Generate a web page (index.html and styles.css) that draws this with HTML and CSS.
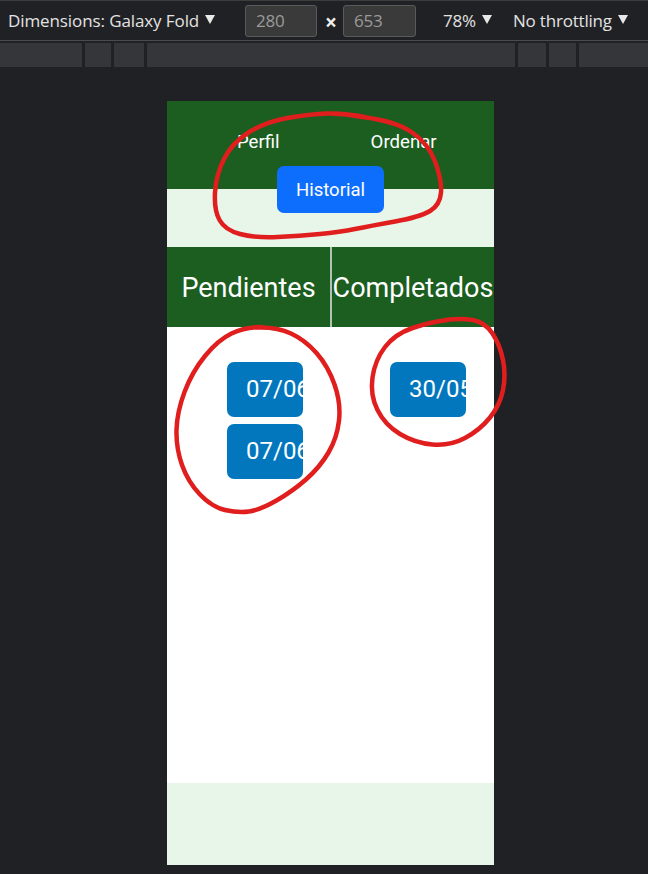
FILE: index.html
```html
<!DOCTYPE html>
<html lang="es">
<head>
<meta charset="utf-8">
<title>Galaxy Fold preview</title>
<link rel="stylesheet" href="styles.css">
</head>
<body>
<div class="devbar">
  <div class="dims">Dimensions: Galaxy Fold<svg class="caret" viewBox="0 0 10 9"><path d="M0 0H10L5 9Z"/></svg></div>
  <div class="box box-w">280</div>
  <div class="times">×</div>
  <div class="box box-h">653</div>
  <div class="zoom">78%<svg class="caret" viewBox="0 0 10 9"><path d="M0 0H10L5 9Z"/></svg></div>
  <div class="throttle">No throttling<svg class="caret" viewBox="0 0 10 9"><path d="M0 0H10L5 9Z"/></svg></div>
</div>
<div class="ruler">
  <div class="seg s1"></div><div class="seg s2"></div><div class="seg s3"></div><div class="seg s4"></div><div class="seg s5"></div><div class="seg s6"></div><div class="seg s7"></div>
</div>

<div class="phone">
  <header class="app-header">
    <nav class="nav">
      <span class="nav-link">Perfil</span>
      <span class="nav-link">Ordenar</span>
    </nav>
    <button class="btn-hist">Historial</button>
  </header>
  <div class="band"></div>
  <div class="tabs">
    <div class="tab tab-left">Pendientes</div>
    <div class="tab tab-right">Completados</div>
  </div>
  <main class="content">
    <div class="col col-left">
      <div class="date">07/06</div>
      <div class="date">07/06</div>
    </div>
    <div class="col col-right">
      <div class="date">30/05</div>
    </div>
  </main>
  <footer class="footer"></footer>
</div>

<svg class="marks" viewBox="0 0 648 874" width="648" height="874">
  <path d="M327.5 113.5 Q345 113 362.5 117 Q395 121 411.5 132 Q428 143 435 161.5 Q442 180 441 192.5 Q440 205 430 211 Q420 217 395 221.5 Q370 226 355 229 Q340 232 320 234 Q300 236 277.5 237 Q255 238 240 234 Q225 230 219.5 220 Q214 210 215 192.5 Q216 175 224 159 Q232 143 248.5 132.5 Q265 122 287.5 118 Q310 114 327.5 113.5 Q345 113 365 117"/>
  <path d="M258.5 327.5 Q277 327 291 333.5 Q305 340 316.5 353 Q328 366 334.5 384.5 Q341 403 339 420.5 Q337 438 328.5 452.5 Q320 467 306.5 479 Q293 491 276.5 500.5 Q260 510 249 511.5 Q238 513 225 510 Q212 507 200 494.5 Q188 482 182 465 Q176 448 176.5 430 Q177 412 184.5 392 Q192 372 205 356 Q218 340 231.5 333.5 Q245 327 262 327"/>
  <path d="M447.5 320 Q430 322 412.5 328 Q395 334 385 347 Q375 360 372.5 377.5 Q370 395 377.5 410 Q385 425 400 434 Q415 443 432.5 444.5 Q450 446 465 438 Q480 430 490 417.5 Q500 405 503 390 Q506 375 503 360 Q500 345 492.5 333.5 Q485 322 472.5 320 Q460 318 445 320"/>
</svg>
</body>
</html>
```

FILE: styles.css
```css
html, body {
  margin: 0;
  padding: 0;
}
body {
  background: #202124;
  width: 648px;
  height: 874px;
  overflow: hidden;
  position: relative;
  font-family: Roboto, "Noto Sans", sans-serif;
}

/* devtools toolbar */
.devbar {
  box-sizing: border-box;
  height: 41px;
  border-top: 1px solid #3c3c3c;
  border-bottom: 1px solid #4a4b4d;
  background: #202124;
  display: flex;
  align-items: center;
  font-family: "Open Sans", "Noto Sans", sans-serif;
  font-size: 17px;
  color: #e3e3e3;
}
.caret {
  flex-shrink: 0;
  width: 10px;
  height: 9px;
  fill: #e8e8e8;
  margin-left: 6px;
  margin-top: -3px;
}
.dims {
  display: flex;
  align-items: center;
  width: 208px;
  padding-left: 8px;
  letter-spacing: -0.1px;
  white-space: nowrap;
}
.box {
  box-sizing: border-box;
  height: 32px;
  background: #3a3a3a;
  border: 1px solid #5a5a5a;
  border-radius: 3px;
  color: #9b9b9b;
  padding-left: 10px;
  line-height: 30px;
  letter-spacing: -0.2px;
}
.box-w {
  width: 72px;
  margin-left: 29px;
}
.times {
  width: 12px;
  margin: 4px 6px 0 8px;
  font-weight: 700;
  color: #f0f0f0;
  font-size: 21px;
  line-height: 1;
  text-align: center;
}
.box-h {
  width: 73px;
}
.zoom {
  display: flex;
  align-items: center;
  margin-left: 27px;
  width: 50px;
  letter-spacing: -0.2px;
}
.throttle {
  display: flex;
  align-items: center;
  margin-left: 20px;
  letter-spacing: -0.2px;
  white-space: nowrap;
}

/* ruler */
.ruler {
  display: flex;
  height: 24px;
  margin-top: 2px;
}
.seg {
  background: #35363a;
  border-right: 3px solid #202124;
  height: 24px;
}
.s1 { width: 82px; }
.s2 { width: 26px; }
.s3 { width: 30px; }
.s4 { width: 368px; }
.s5 { width: 28px; }
.s6 { width: 27px; }
.s7 { flex: 1; border-right: 0; }

/* emulated phone */
.phone {
  width: 327px;
  height: 764px;
  margin: 34px 0 0 167px;
  display: flex;
  flex-direction: column;
  background: #ffffff;
}
.app-header {
  flex-shrink: 0;
  background: #1b5e20;
  height: 88px;
  display: flex;
  flex-direction: column;
  align-items: center;
  position: relative;
  z-index: 1;
}
.nav {
  align-self: stretch;
  display: flex;
  padding: 31px 0 0 70px;
  gap: 91px;
}
.nav-link {
  color: #ffffff;
  font-size: 18.6px;
  line-height: 21px;
}
.btn-hist {
  flex-shrink: 0;
  margin-top: 13px;
  width: 107px;
  height: 47px;
  border: 0;
  border-radius: 7px;
  background: #0d6efd;
  color: #ffffff;
  font-family: Roboto, sans-serif;
  font-size: 18.5px;
  padding: 0;
}
.band {
  flex-shrink: 0;
  height: 58px;
  background: #e8f5e9;
}
.tabs {
  flex-shrink: 0;
  display: flex;
  height: 80px;
  background: #1b5e20;
}
.tab {
  color: #ffffff;
  font-size: 27px;
  display: flex;
  align-items: center;
  justify-content: center;
  white-space: nowrap;
  padding-top: 1px;
}
.tab-left {
  width: 163px;
}
.tab-right {
  flex: 1;
  border-left: 2px solid #b3c2b3;
  overflow: hidden;
}
.content {
  flex: 1;
  display: flex;
  padding-top: 35px;
}
.col {
  display: flex;
  flex-direction: column;
  gap: 7px;
}
.col-left {
  width: 163px;
  padding-left: 60px;
  box-sizing: border-box;
}
.col-right {
  padding-left: 60px;
}
.date {
  box-sizing: border-box;
  width: 76px;
  height: 55px;
  border-radius: 7px;
  background: #0277bd;
  color: #ffffff;
  font-size: 24px;
  line-height: 55px;
  padding-left: 19px;
  overflow: hidden;
  white-space: nowrap;
}
.footer {
  flex-shrink: 0;
  height: 82px;
  background: #e8f5e9;
}

/* hand-drawn annotations over the screenshot */
.marks {
  position: absolute;
  left: 0;
  top: 0;
  z-index: 2;
  pointer-events: none;
  fill: none;
  stroke: #e01e1e;
  stroke-width: 4.5;
  stroke-linecap: round;
  stroke-linejoin: round;
}
```
